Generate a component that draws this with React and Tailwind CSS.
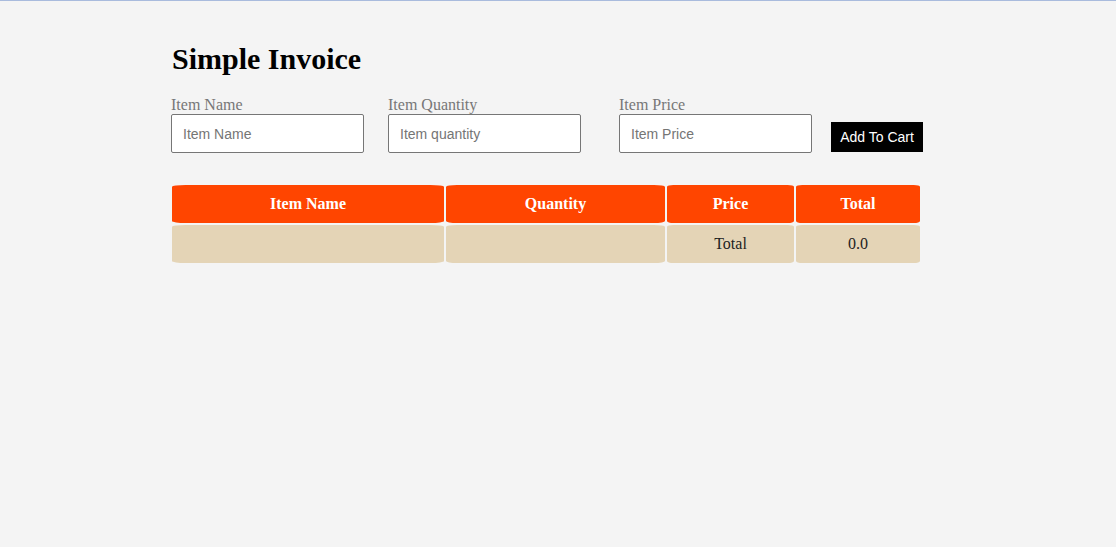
export default function App() {
  const serif = { fontFamily: '"Liberation Serif", "Times New Roman", serif' }
  const sans = { fontFamily: '"Liberation Sans", Arial, sans-serif' }
  return (
    <div className="min-h-[547px] w-full bg-[#f4f4f4] border-t border-[#a9bbdd]" style={serif}>
      <div className="ml-[171px] w-[752px] pt-[40px]">
        <h1 className="text-[30px] leading-[36px] font-bold text-black pl-[1px]">Simple Invoice</h1>

        {/* Form */}
        <div className="flex items-end mt-[19px]">
          <div className="flex flex-col w-[193px]">
            <label className="text-[16px] leading-[18px] text-[#777]">Item Name</label>
            <input
              placeholder="Item Name"
              className="h-[39px] w-[193px] bg-white border border-[#767676] rounded-[2px] px-[11px] text-[14px] text-black placeholder:text-[#757575]"
              style={sans}
            />
          </div>
          <div className="flex flex-col w-[193px] ml-[24px]">
            <label className="text-[16px] leading-[18px] text-[#777]">Item Quantity</label>
            <input
              placeholder="Item quantity"
              className="h-[39px] w-[193px] bg-white border border-[#767676] rounded-[2px] px-[11px] text-[14px] text-black placeholder:text-[#757575]"
              style={sans}
            />
          </div>
          <div className="flex flex-col w-[193px] ml-[38px]">
            <label className="text-[16px] leading-[18px] text-[#777]">Item Price</label>
            <input
              placeholder="Item Price"
              className="h-[39px] w-[193px] bg-white border border-[#767676] rounded-[2px] px-[11px] text-[14px] text-black placeholder:text-[#757575]"
              style={sans}
            />
          </div>
          <button
            className="ml-[19px] mb-[1px] h-[30px] w-[92px] bg-black text-white text-[14px]"
            style={sans}
          >
            Add To Cart
          </button>
        </div>

        {/* Cart table */}
        <table className="mt-[30px] -ml-[1px] border-separate border-spacing-[2px] text-[16px]">
          <thead>
            <tr>
              <th className="w-[272px] h-[38px] bg-[#ff4500] text-white font-bold rounded-[5%]">Item Name</th>
              <th className="w-[219px] h-[38px] bg-[#ff4500] text-white font-bold rounded-[5%]">Quantity</th>
              <th className="w-[127px] h-[38px] bg-[#ff4500] text-white font-bold rounded-[5%]">Price</th>
              <th className="w-[124px] h-[38px] bg-[#ff4500] text-white font-bold rounded-[5%]">Total</th>
            </tr>
          </thead>
          <tbody>
            <tr>
              <td className="h-[38px] bg-[#e4d4b6] rounded-[5%]"></td>
              <td className="h-[38px] bg-[#e4d4b6] rounded-[5%]"></td>
              <td className="h-[38px] bg-[#e4d4b6] rounded-[5%] text-center text-[#222]">Total</td>
              <td className="h-[38px] bg-[#e4d4b6] rounded-[5%] text-center text-[#222]">0.0</td>
            </tr>
          </tbody>
        </table>
      </div>
    </div>
  )
}
